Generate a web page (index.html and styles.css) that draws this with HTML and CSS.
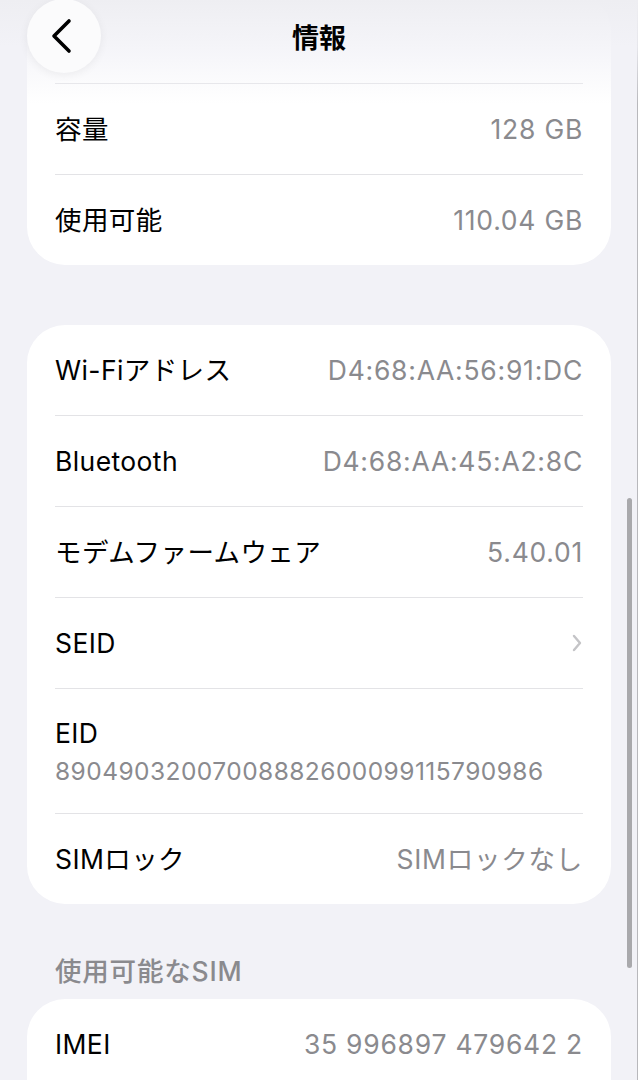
FILE: index.html
```html
<!DOCTYPE html>
<html lang="ja">
<head>
    <meta charset="UTF-8">
    <meta name="viewport" content="width=device-width, initial-scale=1.0">
    <title>情報</title>
    <link rel="stylesheet" href="styles.css">
</head>
<body>
    <header class="nav">
        <button class="back-btn" aria-label="戻る">
            <svg width="24" height="36" viewBox="0 0 24 36">
                <path d="M19 3 L4 18 L19 33" fill="none" stroke="#000" stroke-width="3.6" stroke-linecap="round" stroke-linejoin="round"/>
            </svg>
        </button>
        <h1 class="nav-title">情報</h1>
    </header>

    <main class="content">
        <section class="card card-first">
            <div class="row row-hidden"></div>
            <div class="row"><span class="label">容量</span><span class="value">128 GB</span></div>
            <div class="row"><span class="label">使用可能</span><span class="value">110.04 GB</span></div>
        </section>

        <section class="card card-gap">
            <div class="row"><span class="label">Wi-Fiアドレス</span><span class="value">D4:68:AA:56:91:DC</span></div>
            <div class="row"><span class="label">Bluetooth</span><span class="value">D4:68:AA:45:A2:8C</span></div>
            <div class="row"><span class="label">モデムファームウェア</span><span class="value">5.40.01</span></div>
            <div class="row">
                <span class="label">SEID</span>
                <svg class="disclosure" width="10" height="18" viewBox="0 0 10 18">
                    <path d="M2 2 L8 9 L2 16" fill="none" stroke="#c4c4c7" stroke-width="2.4" stroke-linecap="round" stroke-linejoin="round"/>
                </svg>
            </div>
            <div class="row row-stack">
                <span class="label">EID</span>
                <span class="sub">89049032007008882600099115790986</span>
            </div>
            <div class="row"><span class="label">SIMロック</span><span class="value">SIMロックなし</span></div>
        </section>

        <h2 class="section-head">使用可能なSIM</h2>

        <section class="card card-tail">
            <div class="row row-open"><span class="label">IMEI</span><span class="value">35 996897 479642 2</span></div>
        </section>
    </main>

    <div class="scrollbar"></div>
    <div class="edge"></div>
</body>
</html>
```

FILE: styles.css
```css
/* Reset */
* {
    margin: 0;
    padding: 0;
    box-sizing: border-box;
}

html, body {
    height: 1080px;
    overflow: hidden;
}

body {
    position: relative;
    background: #f2f2f7;
    color: #000;
    font-family: Inter, "Noto Sans CJK JP", sans-serif;
    font-size: 26.5px;
    letter-spacing: 0.4px;
}

/* Navigation bar (floats over the list) */
.nav {
    position: absolute;
    top: 0;
    left: 0;
    right: 0;
    height: 104px;
    z-index: 5;
    background: linear-gradient(to bottom, rgba(238, 238, 242, 1) 0%, rgba(242, 242, 247, 0.8) 45%, rgba(242, 242, 247, 0) 100%);
}

.back-btn {
    position: absolute;
    left: 27px;
    top: -1px;
    width: 74px;
    height: 74px;
    border: none;
    border-radius: 50%;
    background: #fbfbfc;
    box-shadow: 0 2px 10px rgba(0, 0, 0, 0.06);
    display: flex;
    align-items: center;
    justify-content: center;
    padding-right: 4px;
}

.nav-title {
    text-align: center;
    font-family: "Noto Sans CJK JP", sans-serif;
    font-size: 27px;
    font-weight: 700;
    line-height: 74px;
    letter-spacing: 0;
}

/* List */
.content {
    padding: 0 27px;
}

.card {
    background: #fff;
    border-radius: 38px;
    overflow: hidden;
}

.card-first {
    margin-top: -7px;
}

.card-gap {
    margin-top: 60px;
}

.card-tail {
    min-height: 160px;
}

.row {
    display: flex;
    justify-content: space-between;
    align-items: center;
    height: 91px;
    margin: 0 28px;
    border-bottom: 1px solid #e3e3e6;
}

.row:last-child {
    border-bottom: none;
    height: 90px;
}

.row-hidden {
    height: 91px;
}

.row-stack {
    flex-direction: column;
    align-items: flex-start;
    justify-content: center;
    height: 125px;
    gap: 4px;
}

.label {
    line-height: 36px;
}

.value {
    color: #8a8a8e;
    line-height: 36px;
    letter-spacing: 0.75px;
}

.sub {
    color: #8a8a8e;
    font-size: 24.5px;
    line-height: 32px;
    letter-spacing: 0.45px;
}

.disclosure {
    margin-right: 1px;
}

.section-head {
    font-size: 26.5px;
    font-weight: 500;
    color: #8a8a8e;
    line-height: 30px;
    padding: 52px 28px 13px;
    letter-spacing: 0.8px;
}

/* Overlays */
.scrollbar {
    position: absolute;
    left: 627px;
    top: 498px;
    width: 4.5px;
    height: 470px;
    border-radius: 3px;
    background: #a9a9ac;
}

.edge {
    position: absolute;
    top: 0;
    right: 0;
    width: 1px;
    height: 100%;
    background: #b8b8bc;
}
```
